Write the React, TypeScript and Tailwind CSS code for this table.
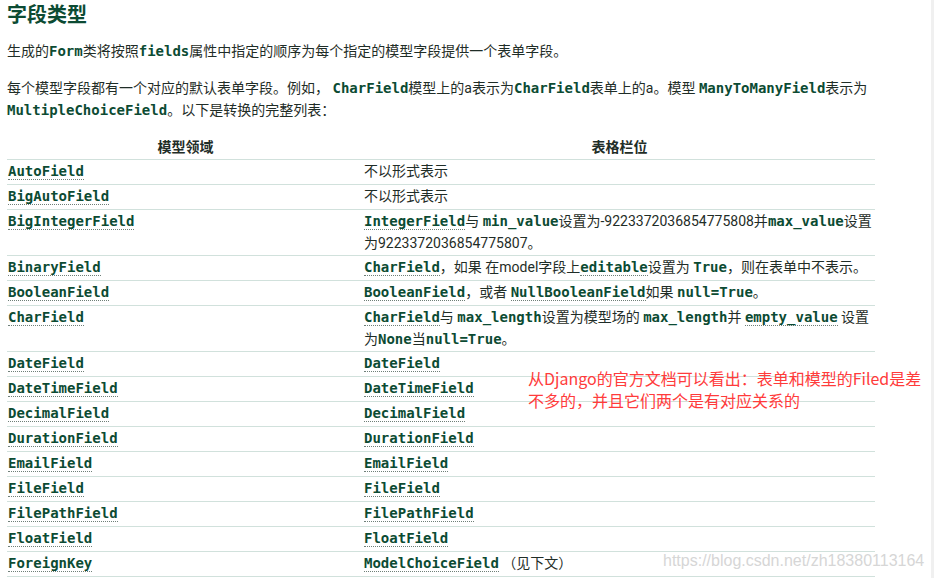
import React from 'react';

const body = { fontFamily: 'Roboto, "Noto Sans CJK SC", sans-serif' };

function C({ children, u }: { children: React.ReactNode; u?: boolean }) {
  return (
    <code
      className={
        'font-bold text-[14px] leading-none text-[#0c4b33] ' +
        (u ? 'border-b border-dotted border-[#6f7f78]' : '')
      }
      style={{ fontFamily: '"DejaVu Sans Mono", monospace' }}
    >
      {children}
    </code>
  );
}

type Row = { model: string; form: React.ReactNode; two?: boolean };

const rows: Row[] = [
  { model: 'AutoField', form: '不以形式表示' },
  { model: 'BigAutoField', form: '不以形式表示' },
  {
    model: 'BigIntegerField',
    two: true,
    form: (
      <>
        <C u>IntegerField</C>与 <C>min_value</C>设置为-9223372036854775808并<C>max_value</C>设置
        <br />
        为9223372036854775807。
      </>
    ),
  },
  {
    model: 'BinaryField',
    form: (
      <>
        <C u>CharField</C>，如果 在model字段上<C u>editable</C>设置为 <C>True</C>，则在表单中不表示。
      </>
    ),
  },
  {
    model: 'BooleanField',
    form: (
      <>
        <C u>BooleanField</C>，或者 <C u>NullBooleanField</C>如果 <C>null=True</C>。
      </>
    ),
  },
  {
    model: 'CharField',
    two: true,
    form: (
      <>
        <C u>CharField</C>与 <C>max_length</C>设置为模型场的 <C>max_length</C>并 <C u>empty_value</C> 设置
        <br />
        为<C>None</C>当<C>null=True</C>。
      </>
    ),
  },
  { model: 'DateField', form: <C u>DateField</C> },
  { model: 'DateTimeField', form: <C u>DateTimeField</C> },
  { model: 'DecimalField', form: <C u>DecimalField</C> },
  { model: 'DurationField', form: <C u>DurationField</C> },
  { model: 'EmailField', form: <C u>EmailField</C> },
  { model: 'FileField', form: <C u>FileField</C> },
  { model: 'FilePathField', form: <C u>FilePathField</C> },
  { model: 'FloatField', form: <C u>FloatField</C> },
  {
    model: 'ForeignKey',
    form: (
      <>
        <C u>ModelChoiceField</C> （见下文）
      </>
    ),
  },
];

export default function App() {
  return (
    <div className="flex h-[578px] w-[934px] overflow-hidden bg-white" style={body}>
      <div className="relative flex-1 pl-[7px] text-[14px] leading-[22px] text-[#1f2d27]">
        {/* Heading */}
        <h2 className="mt-[1px] text-[20px] font-bold leading-[28px] text-[#0c4b33]">字段类型</h2>

        <p className="mt-[11px] whitespace-nowrap">
          生成的<C>Form</C>类将按照<C>fields</C>属性中指定的顺序为每个指定的模型字段提供一个表单字段。
        </p>

        <p className="mt-[15px] whitespace-nowrap">
          每个模型字段都有一个对应的默认表单字段。例如， <C>CharField</C>模型上的a表示为<C>CharField</C>表单上的a。模型 <C>ManyToManyField</C>表示为
          <br />
          <C>MultipleChoiceField</C>。以下是转换的完整列表：
        </p>

        {/* Conversion table */}
        <table className="mt-[14px] w-[868px] table-fixed border-collapse">
          <colgroup>
            <col className="w-[357px]" />
            <col />
          </colgroup>
          <thead>
            <tr className="border-b border-[#d1e1dc]">
              <th className="py-[1px] text-center font-bold text-[#1f2d27]">模型领域</th>
              <th className="py-[1px] text-center font-bold text-[#1f2d27]">表格栏位</th>
            </tr>
          </thead>
          <tbody>
            {rows.map((r) => (
              <tr key={r.model} className="border-b border-[#d1e1dc]">
                <td className={(r.two ? 'pb-[1px]' : 'pb-[2px]') + ' pl-[1px] align-top'}>
                  <C u>{r.model}</C>
                </td>
                <td className={(r.two ? 'pb-[1px]' : 'pb-[2px]') + ' whitespace-nowrap align-top'}>
                  {r.form}
                </td>
              </tr>
            ))}
          </tbody>
        </table>

        {/* Annotation */}
        <div
          className="absolute left-[528px] top-[367px] whitespace-nowrap text-[16px] leading-[22px] text-[#ff3b3b]"
          style={{ fontFamily: '"Noto Sans CJK SC", sans-serif' }}
        >
          从Django的官方文档可以看出：表单和模型的Filed是差
          <br />
          不多的，并且它们两个是有对应关系的
        </div>

        {/* Watermark */}
        <div
          className="absolute left-[663px] top-[550px] whitespace-nowrap text-[16px] leading-[22px] text-[#d6d6d6]"
          style={{ fontFamily: '"Liberation Sans", Arial, sans-serif' }}
        >
          https://blog.csdn.net/zh18380113164
        </div>
      </div>
      <div className="w-[3px] bg-[#f0f0f0]" />
    </div>
  );
}
